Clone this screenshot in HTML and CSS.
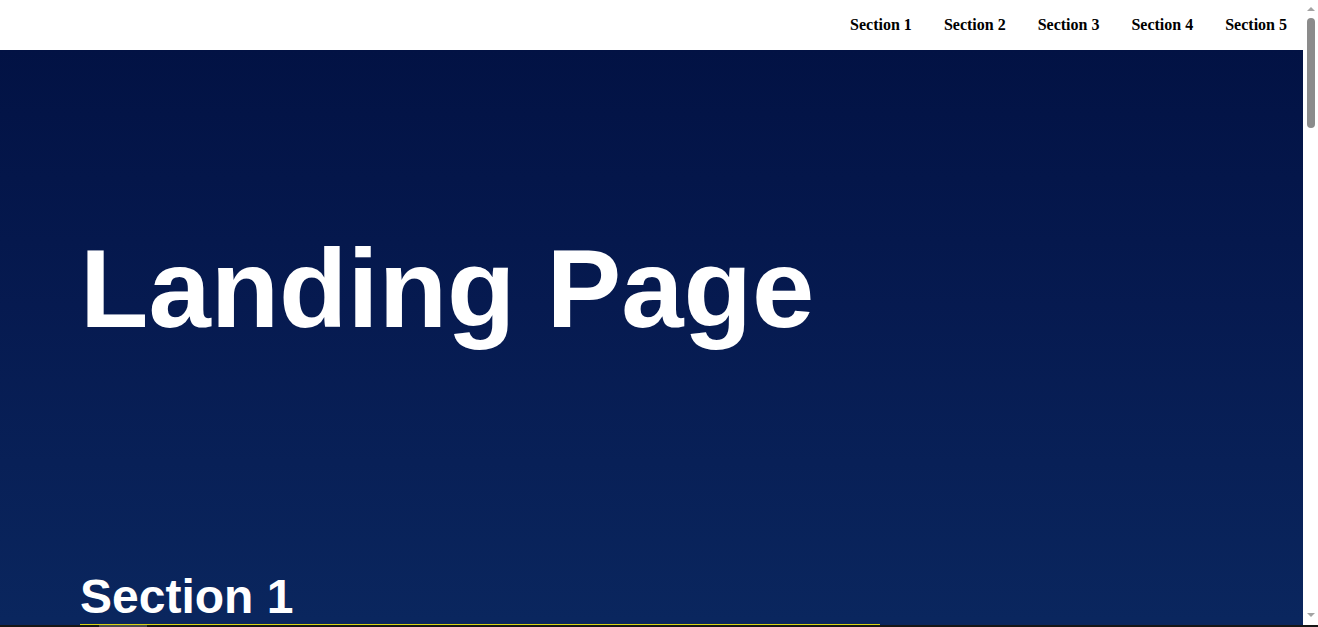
FILE: index.html
```html
<!DOCTYPE html>
<html lang="en">
<head>
<meta charset="utf-8">
<title>Landing Page</title>
<link rel="stylesheet" href="styles.css">
</head>
<body>
<div class="window">
  <div class="window-main">
    <div class="viewport">
      <header class="page-header">
        <nav class="navbar">
          <ul class="navbar-list">
            <li><a class="menu-link" href="#section1">Section 1</a></li>
            <li><a class="menu-link" href="#section2">Section 2</a></li>
            <li><a class="menu-link" href="#section3">Section 3</a></li>
            <li><a class="menu-link" href="#section4">Section 4</a></li>
            <li><a class="menu-link" href="#section5">Section 5</a></li>
          </ul>
        </nav>
      </header>
      <main class="main">
        <div class="hero">
          <h1 class="hero-title">Landing Page</h1>
        </div>
        <section id="section1" class="section">
          <div class="container">
            <h2 class="section-title">Section 1</h2>
          </div>
        </section>
      </main>
    </div>
    <div class="vscroll" aria-hidden="true">
      <span class="arrow-up"></span>
      <span class="thumb"></span>
      <span class="vscroll-fill"></span>
      <span class="arrow-down"></span>
    </div>
  </div>
  <div class="hscroll" aria-hidden="true">
    <span class="hthumb"></span>
  </div>
</div>
</body>
</html>
```

FILE: styles.css
```css
html, body {
  margin: 0;
  padding: 0;
  height: 100%;
  overflow: hidden;
}

body {
  font-family: "Liberation Serif", serif;
  color: #fff;
  background: #fff;
}

.window {
  display: flex;
  flex-direction: column;
  height: 627px;
}

.window-main {
  display: flex;
  height: 625px;
}

.viewport {
  flex: 1;
  overflow: hidden;
  background-color: #0a265e;
  background-image: linear-gradient(180deg, #000d3c 0px, #021244 50px, #061a50 305px, #0a265e 620px);
  background-repeat: no-repeat;
}

.page-header {
  background: #fff;
  height: 50px;
}

.navbar-list {
  list-style: none;
  margin: 0;
  padding: 0;
  display: flex;
  justify-content: flex-end;
}

.menu-link {
  display: block;
  padding: 16px;
  font-family: "Liberation Serif", serif;
  font-weight: bold;
  font-size: 16px;
  line-height: 18px;
  color: #000;
  text-decoration: none;
}

.hero {
  padding-left: 80px;
}

.hero-title {
  margin: 176px 0 0 0;
  font-family: "Liberation Sans", Arial, sans-serif;
  font-size: 112px;
  font-weight: bold;
  line-height: 125px;
}

.container {
  padding: 218px 80px 0 80px;
  max-width: 800px;
}

.section-title {
  margin: 0;
  font-family: "Liberation Sans", Arial, sans-serif;
  font-size: 48px;
  font-weight: bold;
  line-height: 55px;
  border-bottom: 1px solid #d4d414;
}

.vscroll {
  width: 15px;
  background: #fff;
  display: flex;
  flex-direction: column;
  align-items: center;
}

.arrow-up {
  margin-top: 7px;
  width: 0;
  height: 0;
  border-left: 4px solid transparent;
  border-right: 4px solid transparent;
  border-bottom: 4px solid #a3a3a3;
}

.thumb {
  margin-top: 7px;
  width: 8px;
  height: 110px;
  border-radius: 4px;
  background: #8b8b8b;
}

.vscroll-fill {
  flex: 1;
}

.arrow-down {
  margin-bottom: 8px;
  width: 0;
  height: 0;
  border-left: 4px solid transparent;
  border-right: 4px solid transparent;
  border-top: 4px solid #a3a3a3;
}

.hscroll {
  height: 2px;
  background: #161616;
  display: flex;
  padding-left: 99px;
}

.hthumb {
  width: 48px;
  background: #4d4d4d;
}
```
